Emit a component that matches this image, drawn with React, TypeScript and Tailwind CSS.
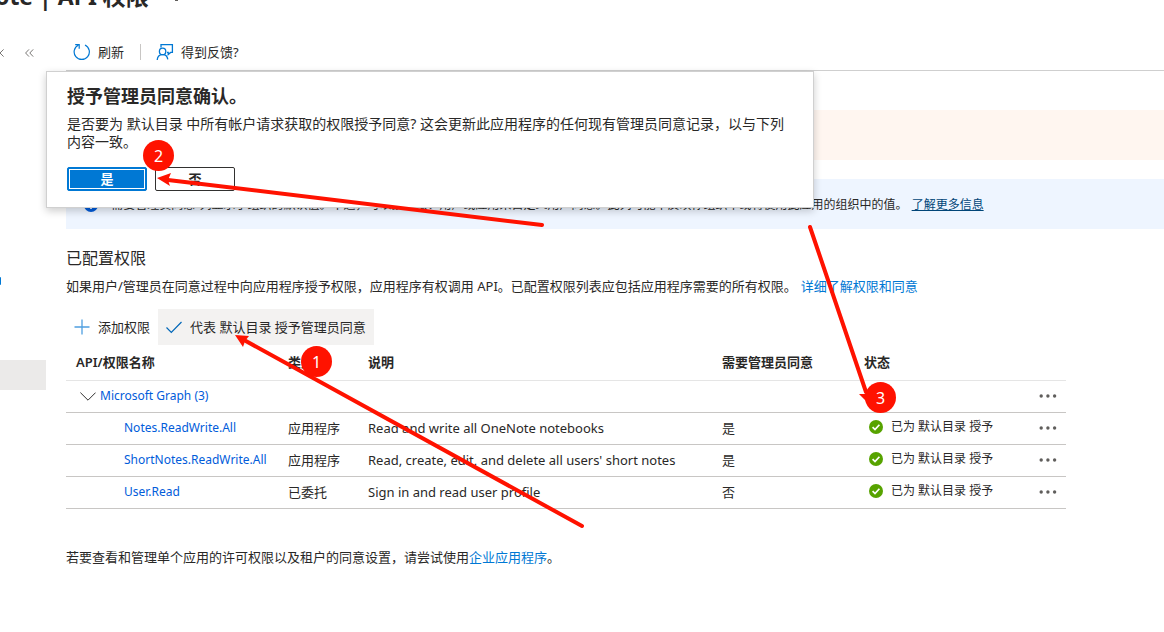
import type { ReactNode } from 'react';

interface Permission {
  name: string;
  type: string;
  description: string;
  adminConsent: string;
}

const PERMISSIONS: Permission[] = [
  {
    name: 'Notes.ReadWrite.All',
    type: '应用程序',
    description: 'Read and write all OneNote notebooks',
    adminConsent: '是',
  },
  {
    name: 'ShortNotes.ReadWrite.All',
    type: '应用程序',
    description: "Read, create, edit, and delete all users' short notes",
    adminConsent: '是',
  },
  {
    name: 'User.Read',
    type: '已委托',
    description: 'Sign in and read user profile',
    adminConsent: '否',
  },
];

function RefreshIcon() {
  return (
    <svg width="18" height="18" viewBox="0 0 18 18" fill="none" stroke="#0078d4" strokeWidth="1.2">
      <path d="M5.5 2 A7.6 7.6 0 1 0 12 2" />
      <path d="M2.2 1.6 H6.2 V5.8" />
    </svg>
  );
}

function FeedbackIcon() {
  return (
    <svg width="18" height="18" viewBox="0 0 18 18" fill="none" stroke="#0078d4" strokeWidth="1.3">
      <path d="M5 4.5 V1.6 H16.4 V9.4 H14.6 L12.2 11.6 V9.4 H11" />
      <circle cx="6.6" cy="8.4" r="3.2" />
      <path d="M1.2 17 C1.4 13.4 3.6 11.6 6.6 11.6 C9.6 11.6 11.4 13.4 11.8 16.4" />
    </svg>
  );
}

function PlusIcon() {
  return (
    <svg width="16" height="16" viewBox="0 0 16 16" stroke="#4f9fe0" strokeWidth="1.3">
      <path d="M8 0.5 V15.5 M0.5 8 H15.5" />
    </svg>
  );
}

function CheckIcon() {
  return (
    <svg width="16" height="16" viewBox="0 0 16 16" fill="none" stroke="#0067b8" strokeWidth="1.2">
      <path d="M0.5 8.5 L5.3 13.3 L15.5 3" />
    </svg>
  );
}

function GrantedIcon() {
  return (
    <svg width="14" height="14" viewBox="0 0 14 14" fill="none">
      <circle cx="7" cy="7" r="7" fill="#57a300" />
      <path d="M3.6 7.2 L6 9.6 L10.4 4.8" stroke="#fff" strokeWidth="1.7" />
    </svg>
  );
}

function MoreButton() {
  return (
    <button type="button" aria-label="更多" className="flex h-4 items-center">
      <svg width="18" height="4" viewBox="0 0 18 4" fill="#605e5c">
        <circle cx="2.2" cy="2" r="1.7" />
        <circle cx="8.9" cy="2" r="1.7" />
        <circle cx="15.6" cy="2" r="1.7" />
      </svg>
    </button>
  );
}

function Sidebar() {
  return (
    <div className="flex w-[46px] shrink-0 flex-col overflow-hidden">
      <div className="flex h-12 items-center justify-between pr-3">
        <svg width="4" height="8" viewBox="0 0 4 8" fill="none" stroke="#797775">
          <path d="M3.6 0.4 L0 4 L3.6 7.6" />
        </svg>
        <svg width="9" height="8" viewBox="0 0 9 8" fill="none" stroke="#797775">
          <path d="M4 0.4 L0.6 4 L4 7.6 M8.2 0.4 L4.8 4 L8.2 7.6" />
        </svg>
      </div>
      <div className="mt-[200px] h-2 w-px rounded-r-full bg-[#0078d4]" />
      <div className="mt-[75px] h-[30px] bg-[#ebeae9]" />
    </div>
  );
}

function Toolbar() {
  return (
    <div className="flex h-[42px] items-center border-b border-[#cfcfcf] pt-1 pl-[7px]">
      <button type="button" className="flex items-center gap-[7px]">
        <RefreshIcon />
        刷新
      </button>
      <div className="mr-[15px] ml-4 h-4 w-px bg-[#c8c6c4]" />
      <button type="button" className="flex items-center gap-[7px]">
        <FeedbackIcon />
        得到反馈?
      </button>
    </div>
  );
}

function PermissionTable() {
  return (
    <table className="w-full max-w-[1000px] table-fixed text-left">
      <colgroup>
        <col className="w-[212px]" />
        <col className="w-20" />
        <col />
        <col className="w-[142px]" />
        <col className="w-[176px]" />
        <col className="w-9" />
      </colgroup>
      <thead>
        <tr className="h-[35px] border-b border-[#e5e5e5]">
          <th className="px-[10px] font-semibold">API/权限名称</th>
          <th className="px-[10px] font-semibold">类型</th>
          <th className="px-[10px] font-semibold">说明</th>
          <th className="px-[10px] font-semibold">需要管理员同意</th>
          <th className="px-[10px] font-semibold">状态</th>
          <th aria-label="操作" />
        </tr>
      </thead>
      <tbody>
        <tr className="h-8 border-b border-[#c8c6c4]">
          <td colSpan={5} className="pl-[14px]">
            <div className="flex items-center gap-1">
              <svg width="16" height="9" viewBox="0 0 16 9" fill="none" stroke="#323130">
                <path d="M0.4 0.6 L8 8.2 L15.6 0.6" />
              </svg>
              <a href="#graph" className="text-xs text-[#015cda]">Microsoft Graph (3)</a>
            </div>
          </td>
          <td className="pl-[9px]"><MoreButton /></td>
        </tr>
        {PERMISSIONS.map((permission) => (
          <tr key={permission.name} className="h-8 border-b border-[#c8c6c4]">
            <td className="pl-[58px] text-xs whitespace-nowrap">
              <a href={`#${permission.name}`} className="text-[#015cda]">{permission.name}</a>
            </td>
            <td className="px-[10px]">{permission.type}</td>
            <td className="px-[10px] whitespace-nowrap">{permission.description}</td>
            <td className="px-[10px]">{permission.adminConsent}</td>
            <td className="pb-[2px] pl-[15px]">
              <div className="flex items-center gap-2 text-xs">
                <GrantedIcon />
                已为 默认目录 授予
              </div>
            </td>
            <td className="pl-[9px]"><MoreButton /></td>
          </tr>
        ))}
      </tbody>
    </table>
  );
}

function ConsentDialog() {
  return (
    <div
      role="dialog"
      aria-labelledby="consent-title"
      className="absolute top-[71px] left-[46px] w-[768px] border border-[#d0d0d0] bg-white px-5 pt-3 pb-4 shadow-[0_3px_8px_rgba(0,0,0,0.2)]"
    >
      <h2 id="consent-title" className="text-lg leading-6 font-bold">授予管理员同意确认。</h2>
      <p className="mt-[7px] text-sm leading-[18px]">
        是否要为 默认目录 中所有帐户请求获取的权限授予同意? 这会更新此应用程序的任何现有管理员同意记录，以与下列内容一致。
      </p>
      <div className="mt-4 flex gap-2">
        <button
          type="button"
          className="h-6 w-20 rounded-xs border border-[#0078d4] bg-[#0078d4] font-bold text-white outline -outline-offset-3 outline-white"
        >
          是
        </button>
        <button type="button" className="h-6 w-20 rounded-xs border border-[#323130] bg-white font-bold">
          否
        </button>
      </div>
    </div>
  );
}

function StepBadge({ className, children }: { className: string; children: ReactNode }) {
  return (
    <div
      className={`absolute flex size-[31px] items-center justify-center rounded-full bg-[#ff1200] text-base text-white ${className}`}
    >
      {children}
    </div>
  );
}

// Red arrows and numbered steps drawn over the page
function Annotations() {
  return (
    <div className="pointer-events-none absolute inset-0">
      <svg className="absolute top-0 left-0" width="1164" height="632" viewBox="0 0 1164 632">
        <g stroke="#ff1200" strokeWidth="4" strokeLinecap="round">
          <path d="M542 225 L168 180" />
          <path d="M582 526 L244 340" />
          <path d="M810 227 L866 392" />
        </g>
        <g fill="#ff1200">
          <path d="M157 178 L171 173 L168 180 L170 186 Z" />
          <path d="M235 335 L249 336 L245 341 L243 347 Z" />
          <path d="M869 404 L859 394 L866 394 L872 389 Z" />
        </g>
      </svg>
      <StepBadge className="top-[346px] left-[301px]">1</StepBadge>
      <StepBadge className="top-[140px] left-[143px]">2</StepBadge>
      <StepBadge className="top-[382px] left-[865px]">3</StepBadge>
    </div>
  );
}

export default function App() {
  return (
    <div className="relative min-h-screen overflow-hidden bg-white font-['Noto_Sans','Noto_Sans_CJK_SC',sans-serif] text-[13px] leading-4 text-[#292827]">
      <header className="flex h-[29px] items-start gap-[26px]">
        <h1 className="-mt-[18px] -ml-[5px] text-[23px] leading-7 font-bold">ote | API 权限</h1>
        <div className="h-px w-[3px] bg-[#605e5c]" />
      </header>
      <div className="flex">
        <Sidebar />
        <main className="min-w-0 flex-1 pl-5">
          <Toolbar />
          <div className="mt-[39px] h-[50px] bg-[#fff6f0]" />
          <div className="mt-[19px] flex h-[50px] items-center gap-[9px] bg-[#eef5ff] pt-[2px] pl-[18px] text-xs">
            <svg width="14" height="14" viewBox="0 0 14 14">
              <circle cx="7" cy="7" r="7" fill="#015cda" />
              <path d="M7 6 V11 M7 3 V4.6" stroke="#fff" strokeWidth="1.6" />
            </svg>
            <p className="whitespace-nowrap">
              “需要管理员同意”列显示了组织的默认值。不过，可以按权限、用户或应用来自定义用户同意。此列可能不反映你组织中或将使用此应用的组织中的值。
              <a href="#info" className="ml-1 text-[#004578] underline">了解更多信息</a>
            </p>
          </div>
          <h2 className="mt-[19px] text-base leading-5">已配置权限</h2>
          <p className="mt-[10px]">
            如果用户/管理员在同意过程中向应用程序授予权限，应用程序有权调用 API。已配置权限列表应包括应用程序需要的所有权限。
            <a href="#learn" className="ml-1 text-[#0078d4]">详细了解权限和同意</a>
          </p>
          <div className="mt-[15px] flex h-9">
            <button type="button" className="flex items-center gap-2 px-2">
              <PlusIcon />
              添加权限
            </button>
            <button type="button" className="flex items-center gap-2 bg-[#f3f2f1] px-2">
              <CheckIcon />
              代表 默认目录 授予管理员同意
            </button>
          </div>
          <PermissionTable />
          <p className="mt-10 pb-6">
            若要查看和管理单个应用的许可权限以及租户的同意设置，请尝试使用
            <a href="#enterprise" className="text-[#0078d4]">企业应用程序</a>。
          </p>
        </main>
      </div>
      <ConsentDialog />
      <Annotations />
    </div>
  );
}
